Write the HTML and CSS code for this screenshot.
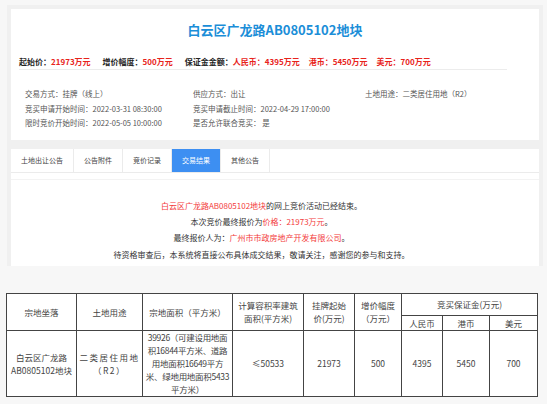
FILE: index.html
```html
<!DOCTYPE html>
<html lang="zh-CN">
<head>
  <meta charset="UTF-8">
  <title>白云区广龙路AB0805102地块</title>
  <link rel="stylesheet" href="styles.css">
</head>
<body>

  <div class="wrap">
    <!-- 地块概要 -->
    <div class="card head">
      <h1 class="title">白云区广龙路AB0805102地块</h1>

      <div class="prices">
        <span>起始价：<em>21973万元</em></span>
        <span>增价幅度：<em>500万元</em></span>
        <span>保证金金额：<em>人民币：4395万元</em><em class="sp">港币：5450万元</em><em class="sp">美元：700万元</em></span>
      </div>

      <div class="info">
        <div>交易方式：挂牌（线上）</div>
        <div>供应方式：出让</div>
        <div class="use">土地用途：二类居住用地（R2）</div>
        <div>竞买申请开始时间：2022-03-31 08:30:00</div>
        <div>竞买申请截止时间：2022-04-29 17:00:00</div>
        <div></div>
        <div>限时竞价开始时间：2022-05-05 10:00:00</div>
        <div>是否允许联合竞买： 是</div>
      </div>
    </div>

    <!-- 选项卡 -->
    <div class="panel">
      <ul class="tabs">
        <li class="first">土地出让公告</li>
        <li>公告附件</li>
        <li>竞价记录</li>
        <li class="active">交易结果</li>
        <li>其他公告</li>
      </ul>

      <div class="result">
        <p><span class="red">白云区广龙路AB0805102地块</span>的网上竞价活动已经结束。</p>
        <p>本次竞价最终报价为<span class="red">价格：21973万元</span>。</p>
        <p>最终报价人为：<span class="red">广州市市政房地产开发有限公司</span>。</p>
        <p>待资格审查后，本系统将直接公布具体成交结果，敬请关注，感谢您的参与和支持。</p>
      </div>
    </div>
  </div>

  <!-- 成交明细 -->
  <table class="deal">
    <colgroup>
      <col style="width:70px">
      <col style="width:66px">
      <col style="width:90px">
      <col style="width:71px">
      <col style="width:51px">
      <col style="width:47px">
      <col style="width:41px">
      <col style="width:47px">
      <col style="width:48px">
    </colgroup>
    <tr class="h1">
      <th rowspan="2">宗地坐落</th>
      <th rowspan="2">土地用途</th>
      <th rowspan="2">宗地面积（平方米）</th>
      <th rowspan="2">计算容积率建筑<br>面积(平方米)</th>
      <th rowspan="2">挂牌起始<br>价(万元)</th>
      <th rowspan="2">增价幅度<br>（万元）</th>
      <th colspan="3">竞买保证金(万元)</th>
    </tr>
    <tr class="h2">
      <th>人民币</th>
      <th>港币</th>
      <th>美元</th>
    </tr>
    <tr class="row">
      <td>白云区广龙路<br>AB0805102地块</td>
      <td class="wide">二类居住用地<br>（R2）</td>
      <td class="area">39926（可建设用地面<br>积16844平方米、道路<br>用地面积16649平方<br>米、绿地用地面积5433<br>平方米）</td>
      <td>≤50533</td>
      <td>21973</td>
      <td>500</td>
      <td>4395</td>
      <td>5450</td>
      <td>700</td>
    </tr>
  </table>

</body>
</html>
```

FILE: styles.css
```css
/* General Reset */
* {
  margin: 0;
  padding: 0;
  box-sizing: border-box;
}

body {
  font-family: "Noto Sans CJK SC", "Liberation Sans", sans-serif;
  background-color: #f7f7f7;
  color: #333;
}

.wrap {
  margin: 5px 4px 0 7px;
  padding: 4px 4px 0 4px;
  background-color: #f0f0f0;
}

.card {
  background-color: #fff;
}

/* 地块概要 */
.head {
  padding: 12px 0 9px 0;
}

.title {
  text-align: center;
  font-size: 13px;
  line-height: 17px;
  font-weight: bold;
  color: #1b8ed8;
}

.prices {
  margin: 18px 32px 0 8px;
  padding-bottom: 1px;
  border-bottom: 1px solid #ececec;
  font-size: 8px;
  line-height: 12px;
  font-weight: bold;
  color: #222;
  display: flex;
  gap: 12px;
}

.prices em {
  font-style: normal;
  color: #e8231b;
}

.prices em.sp {
  margin-left: 9px;
}

.info {
  margin: 17px 0 0 14px;
  display: grid;
  grid-template-columns: 168px 172px 1fr;
  font-size: 7.5px;
  line-height: 14.5px;
  color: #555;
}

/* 选项卡 */
.panel {
  margin-top: 9px;
  background-color: #fff;
}

.tabs {
  list-style: none;
  display: flex;
  height: 24px;
  border-bottom: 1px solid #ebebeb;
}

.tabs li {
  width: 49px;
  border-right: 1px solid #ebebeb;
  font-size: 7px;
  line-height: 23px;
  text-align: center;
  color: #444;
}

.tabs li.first {
  width: 63px;
}

.tabs li.active {
  background-color: #3d8ff2;
  color: #fff;
}

.result {
  margin-top: 6px;
  border-top: 1px solid #f3f3f3;
  padding: 18px 27px 3px 0;
  text-align: center;
  font-size: 8px;
  line-height: 16.4px;
  color: #333;
}

.red {
  color: #f33b3b;
}

/* 成交明细 */
.deal {
  margin: 27px 0 0 6px;
  width: 531px;
  table-layout: fixed;
  border-collapse: collapse;
  background-color: #fff;
  font-size: 8.5px;
  color: #444;
}

.deal th,
.deal td {
  border: 1px solid #444;
  text-align: center;
  font-weight: normal;
  line-height: 13px;
  padding: 0;
}

.deal .h1 th {
  height: 22px;
}

.deal .h2 th {
  height: 15px;
}

.deal .row td {
  height: 66px;
}

.deal td.area {
  white-space: nowrap;
  letter-spacing: -0.3px;
}

.deal td.wide {
  letter-spacing: 1.5px;
}
```
